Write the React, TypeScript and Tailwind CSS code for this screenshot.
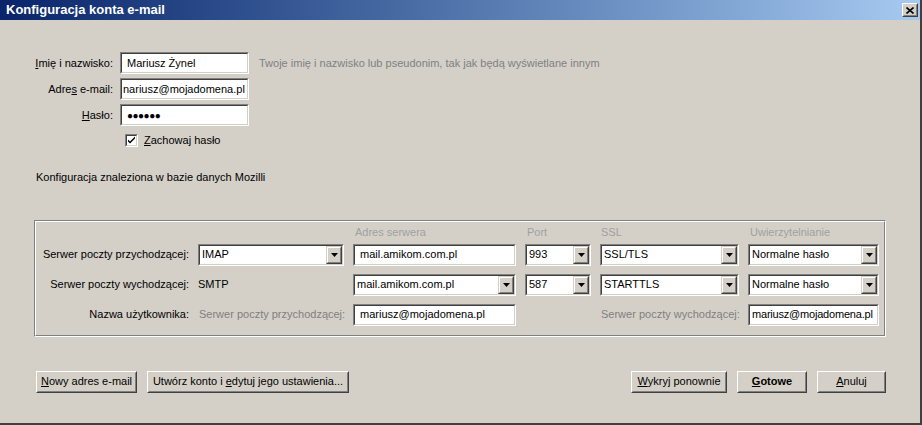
import type { ReactNode } from "react";

function Sunken({ className = "", children }: { className?: string; children?: ReactNode }) {
  return (
    <div className={"border border-t-[#808080] border-l-[#808080] border-b-white border-r-white " + className}>
      <div className="h-full border border-t-[#404040] border-l-[#404040] border-b-[#d4d0c8] border-r-[#d4d0c8] bg-white flex items-center overflow-hidden">
        {children}
      </div>
    </div>
  );
}

function TextBox({ value, className = "", pad = "pl-[5px]" }: { value: ReactNode; className?: string; pad?: string }) {
  return (
    <Sunken className={"h-[22px] " + className}>
      <span className={"whitespace-nowrap text-black " + pad}>{value}</span>
    </Sunken>
  );
}

function DropButton() {
  return (
    <div className="h-full w-[16px] shrink-0 border border-t-[#d4d0c8] border-l-[#d4d0c8] border-b-[#404040] border-r-[#404040]">
      <div className="h-full border border-t-white border-l-white border-b-[#808080] border-r-[#808080] bg-[#d4d0c8] flex items-center justify-center">
        <svg width="7" height="4" viewBox="0 0 7 4">
          <path d="M0 0h7L3.5 4z" fill="#000" />
        </svg>
      </div>
    </div>
  );
}

function Combo({ value, className = "" }: { value: string; className?: string }) {
  return (
    <Sunken className={"h-[22px] " + className}>
      <span className="flex-1 whitespace-nowrap pl-[2px] text-black">{value}</span>
      <DropButton />
    </Sunken>
  );
}

function Button({ children, className = "" }: { children: ReactNode; className?: string }) {
  return (
    <div className={"h-[22px] border border-t-white border-l-white border-b-[#404040] border-r-[#404040] " + className}>
      <div className="h-full border border-t-[#d4d0c8] border-l-[#d4d0c8] border-b-[#808080] border-r-[#808080] bg-[#d4d0c8] flex items-center justify-center whitespace-nowrap">
        {children}
      </div>
    </div>
  );
}

export default function App() {
  return (
    <div
      className="w-[922px] h-[425px] bg-[#d4d0c8] flex flex-col border-r-2 border-b-2 border-r-[#404040] border-b-[#404040] text-[11px] text-black overflow-hidden"
      style={{ fontFamily: '"Liberation Sans", Arial, sans-serif' }}
    >
      {/* title bar */}
      <div className="h-[20px] shrink-0 flex items-center justify-between bg-gradient-to-r from-[#0a246a] to-[#a6caf0] pl-[6px] pr-[2px]">
        <span className="text-white font-bold text-[13px]">Konfiguracja konta e-mail</span>
        <div className="w-[16px] h-[14px] border border-t-white border-l-white border-b-[#404040] border-r-[#404040]">
          <div className="h-full border border-t-[#d4d0c8] border-l-[#d4d0c8] border-b-[#808080] border-r-[#808080] bg-[#d4d0c8] flex items-center justify-center">
            <svg width="8" height="7" viewBox="0 0 8 7">
              <path d="M0.5 0.5l7 6M7.5 0.5l-7 6" stroke="#000" strokeWidth="1.6" />
            </svg>
          </div>
        </div>
      </div>

      {/* identity form */}
      <div className="mt-[32px] ml-[33px] grid grid-cols-[80px_129px_auto] gap-x-[7px] gap-y-[4px] items-center">
        <span className="text-right whitespace-nowrap"><u>I</u>mię i nazwisko:</span>
        <TextBox value="Mariusz Żynel" />
        <span className="ml-[3px] text-[#808080] whitespace-nowrap">Twoje imię i nazwisko lub pseudonim, tak jak będą wyświetlane innym</span>

        <span className="text-right whitespace-nowrap">Adre<u>s</u> e-mail:</span>
        <TextBox value="nariusz@mojadomena.pl" pad="pl-[1px]" />
        <span />

        <span className="text-right whitespace-nowrap"><u>H</u>asło:</span>
        <TextBox value={<span className="text-[10px] tracking-[-0.5px]">●●●●●●</span>} />
        <span />
      </div>

      <div className="mt-[6px] ml-[125px] flex items-center gap-[6px]">
        <Sunken className="w-[13px] h-[13px]">
          <svg width="9" height="9" viewBox="0 0 9 9" className="mx-auto">
            <path d="M1 3.5v2l2 2l5-5v-2l-5 5z" fill="#000" />
          </svg>
        </Sunken>
        <span><u>Z</u>achowaj hasło</span>
      </div>

      <div className="mt-[20px] ml-[36px]">Konfiguracja znaleziona w bazie danych Mozilli</div>

      {/* server group */}
      <div className="mt-[35px] ml-[34px] w-[852px] border border-t-[#808080] border-l-[#808080] border-b-white border-r-white">
        <div className="border border-t-white border-l-white border-b-[#808080] border-r-[#808080] pt-[2px] pb-[9px]">
          <div className="grid grid-cols-[153px_146px_163px_66px_139px_131px] gap-x-[9px] items-center">
            <span />
            <span />
            <span className="pl-[2px] text-[#a0a0a0]">Adres serwera</span>
            <span className="pl-[2px] text-[#a0a0a0]">Port</span>
            <span className="pl-[1px] text-[#a0a0a0]">SSL</span>
            <span className="pl-[2px] text-[#a0a0a0]">Uwierzytelnianie</span>
          </div>
          <div className="mt-[3px] grid grid-cols-[153px_146px_163px_66px_139px_131px] gap-x-[9px] gap-y-[8px] items-center">
            <span className="text-right whitespace-nowrap">Serwer poczty przychodzącej:</span>
            <Combo value="IMAP" />
            <TextBox value="mail.amikom.com.pl" />
            <Combo value="993" />
            <Combo value="SSL/TLS" />
            <Combo value="Normalne hasło" />

            <span className="text-right whitespace-nowrap">Serwer poczty wychodzącej:</span>
            <span className="whitespace-nowrap">SMTP</span>
            <Combo value="mail.amikom.com.pl" />
            <Combo value="587" />
            <Combo value="STARTTLS" />
            <Combo value="Normalne hasło" />

            <span className="text-right whitespace-nowrap">Nazwa użytkownika:</span>
            <span className="whitespace-nowrap text-[#808080] pl-[1px]">Serwer poczty przychodzącej:</span>
            <TextBox value="mariusz@mojadomena.pl" />
            <span />
            <span className="whitespace-nowrap text-[#808080] pl-[1px]">Serwer poczty wychodzącej:</span>
            <TextBox value={<span className="tracking-[-0.2px]">mariusz@mojadomena.pl</span>} pad="pl-[2px]" />
          </div>
        </div>
      </div>

      {/* buttons */}
      <div className="mt-[34px] ml-[36px] mr-[34px] flex items-center">
        <Button className="w-[101px]"><span><u>N</u>owy adres e-mail</span></Button>
        <Button className="ml-[10px] w-[202px]"><span>Utwórz konto i <u>e</u>dytuj jego ustawienia...</span></Button>
        <div className="flex-1" />
        <Button className="w-[96px]"><span><u>W</u>ykryj ponownie</span></Button>
        <Button className="ml-[10px] w-[70px]"><span className="font-bold"><u>G</u>otowe</span></Button>
        <Button className="ml-[10px] w-[69px]"><span><u>A</u>nuluj</span></Button>
      </div>
    </div>
  );
}
